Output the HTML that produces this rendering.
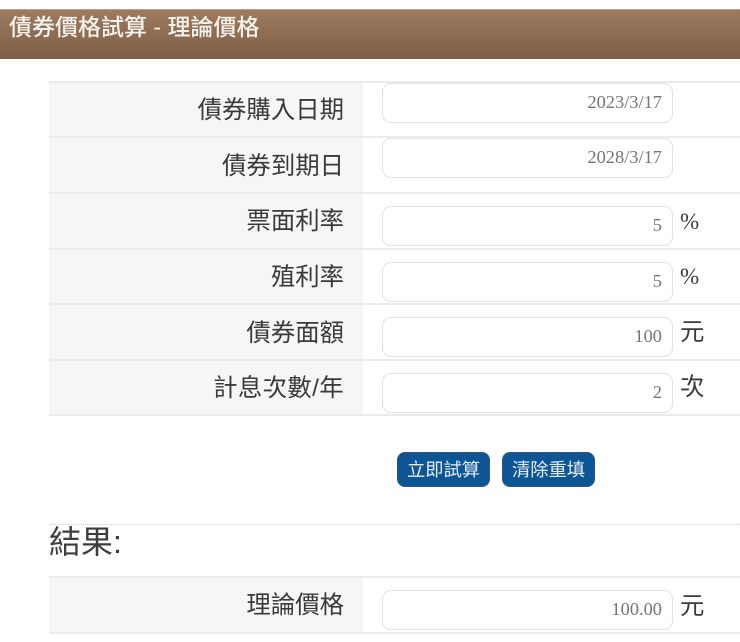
<!DOCTYPE html>
<html lang="zh-Hant">
<head>
<meta charset="utf-8">
<style>
html,body{margin:0;padding:0;background:#fff;}
body{width:740px;height:642px;overflow:hidden;position:relative;font-family:"Liberation Sans","Noto Sans CJK TC",sans-serif;color:#333;}
.a{position:absolute;}
.hdr{left:0;top:9px;width:740px;height:50px;background:linear-gradient(#9d7b60,#7d5e45);border-top:1px solid #b7a08c;box-sizing:border-box;}
.ttl{left:9px;top:12px;font-size:23px;line-height:30px;font-weight:500;color:#f6f3ee;white-space:nowrap;}
.cell{left:49px;width:314px;background:#f6f6f6;}
.line{left:49px;width:691px;height:2px;background:#ebebeb;}
.lab{left:49px;width:295px;text-align:right;font-size:24.4px;line-height:34px;color:#3a3a3a;white-space:nowrap;}
.inp{left:382px;width:291px;height:40px;box-sizing:border-box;border:1.5px solid #e2e2e2;border-radius:9px;background:#fff;text-align:right;padding-right:10px;font-family:"Liberation Serif","Noto Serif CJK TC",serif;font-size:18.4px;line-height:37px;color:#757575;}
.unit{left:680px;font-size:24.4px;line-height:30px;color:#3a3a3a;}
.pct{font-family:"Liberation Serif",serif;font-size:23px;}
.btn{top:452px;height:35px;width:93px;box-sizing:border-box;background:#0e5596;border:1.5px solid #2e5880;border-radius:8px;color:#e4eff9;font-size:18.3px;line-height:33px;text-align:center;white-space:nowrap;}
.dots{left:49px;top:524px;width:691px;border-top:1px dotted #d0d0d0;height:0;}
.res{left:49px;top:522px;font-size:32px;line-height:40px;color:#3d3d3d;}
</style>
</head>
<body>
<div class="a hdr"></div>
<div class="a ttl">債券價格試算 - 理論價格</div>

<div class="a cell" style="top:82px;height:333px"></div>
<div class="a line" style="top:81px"></div>
<div class="a line" style="top:136px"></div>
<div class="a line" style="top:192px"></div>
<div class="a line" style="top:248px"></div>
<div class="a line" style="top:303px"></div>
<div class="a line" style="top:359px"></div>
<div class="a line" style="top:414px"></div>

<div class="a lab" style="top:94px">債券購入日期</div>
<div class="a lab" style="top:150px">債券到期日</div>
<div class="a lab" style="top:205px">票面利率</div>
<div class="a lab" style="top:261px">殖利率</div>
<div class="a lab" style="top:317px">債券面額</div>
<div class="a lab" style="top:372px;letter-spacing:.35px">計息次數/年</div>

<div class="a inp" style="top:83px">2023/3/17</div>
<div class="a inp" style="top:138px">2028/3/17</div>
<div class="a inp" style="top:206px">5</div>
<div class="a inp" style="top:262px">5</div>
<div class="a inp" style="top:317px">100</div>
<div class="a inp" style="top:373px">2</div>

<div class="a unit pct" style="top:207px">%</div>
<div class="a unit pct" style="top:262px">%</div>
<div class="a unit" style="top:318px">元</div>
<div class="a unit" style="top:373px">次</div>

<div class="a btn" style="left:397px">立即試算</div>
<div class="a btn" style="left:502px">清除重填</div>

<div class="a dots"></div>
<div class="a res">結果:</div>

<div class="a cell" style="top:577px;height:55px"></div>
<div class="a line" style="top:576px"></div>
<div class="a line" style="top:632px"></div>
<div class="a lab" style="top:589px">理論價格</div>
<div class="a inp" style="top:590px">100.00</div>
<div class="a unit" style="top:592px">元</div>
</body>
</html>
